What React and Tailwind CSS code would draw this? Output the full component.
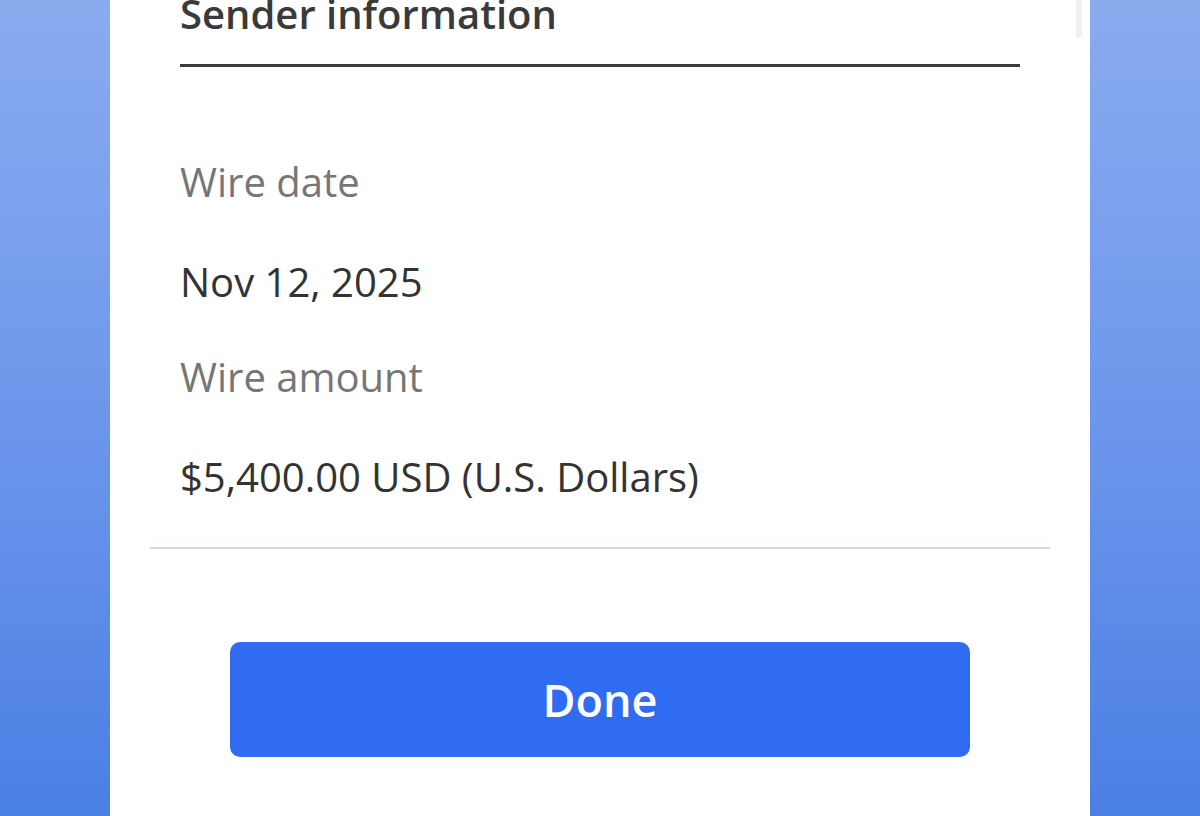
import React from "react";

export default function App() {
  return (
    <div
      className="w-[1200px] h-[816px] overflow-hidden flex bg-gradient-to-b from-[#8aacef] via-[#6e97ec] to-[#4a7fe4]"
      style={{ fontFamily: '"Open Sans", "Noto Sans", sans-serif' }}
    >
      <div className="w-[110px] shrink-0" />
      <div className="w-[980px] h-full bg-white relative flex flex-col">
        {/* scrollbar remnant */}
        <div className="absolute right-[8px] top-0 w-[6px] h-[38px] bg-[#f1f1f1] rounded-b" />

        <div className="px-[70px]">
          <h2 className="mt-[-6px] text-[40px] leading-none font-semibold text-[#3a3a3a]">
            Sender information
          </h2>
          <div className="mt-[30px] h-[3px] bg-[#3b3b3b]" />

          <div className="mt-[95px] text-[40px] leading-none text-[#767676]">Wire date</div>
          <div className="mt-[60px] text-[40px] leading-none text-[#333333]">Nov 12, 2025</div>
          <div className="mt-[55px] text-[40px] leading-none text-[#767676]">Wire amount</div>
          <div className="mt-[60px] text-[40px] leading-none text-[#333333]">
            $5,400.00 USD (U.S. Dollars)
          </div>
        </div>

        <div className="mx-[40px] mt-[50px] h-[2px] bg-[#d6d6d6] shadow-[0_-6px_10px_rgba(0,0,0,0.06)]" />

        <div className="flex justify-center mt-[93px]">
          <button className="w-[740px] h-[115px] rounded-[10px] bg-[#2f6cf1] text-white flex items-center justify-center">
            <span className="text-[45px] leading-none font-semibold">Done</span>
          </button>
        </div>
      </div>
      <div className="w-[110px] shrink-0" />
    </div>
  );
}
